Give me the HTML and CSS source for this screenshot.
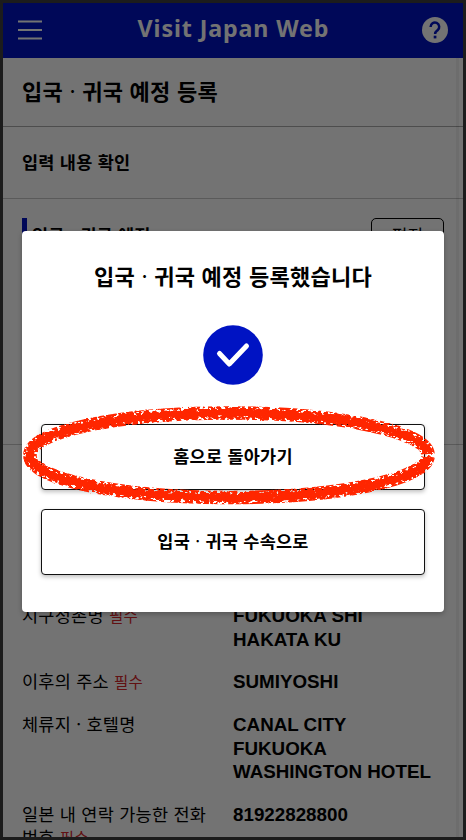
FILE: index.html
```
<!DOCTYPE html>
<html lang="ko">
<head>
<meta charset="utf-8">
<title>Visit Japan Web</title>
<link rel="stylesheet" href="styles.css">
</head>
<body>

<div class="screen">
  <header class="header">
    <svg class="menu-icon" width="24" height="20" viewBox="0 0 24 20">
      <path d="M0 1.5h24M0 10h24M0 18.5h24" stroke="#fff" stroke-width="2.2"/>
    </svg>
    <div class="logo">Visit Japan Web</div>
    <svg class="help-icon" width="26" height="26" viewBox="0 0 26 26">
      <circle cx="13" cy="13" r="13" fill="#fff"/>
      <path d="M8.6 10a4.3 4.3 0 1 1 7 3.2c-1.6 1.3-2.5 1.8-2.5 3.8" fill="none" stroke="#0013c3" stroke-width="2.5"/>
      <path d="M11.7 18.7h2.7v2.7h-2.7z" fill="#0013c3"/>
    </svg>
  </header>

  <h1 class="page-title">입국&nbsp;<span class="dot">·</span>&nbsp;귀국 예정 등록</h1>
  <h2 class="page-subtitle">입력 내용 확인</h2>

  <section class="plan">
    <h3 class="plan-title">입국 <span class="dot">·</span> 귀국 예정</h3>
    <button class="edit-button">편집</button>
  </section>

  <section class="address">
    <div class="row">
      <div class="label">시구정촌명 <span class="required">필수</span></div>
      <div class="value">FUKUOKA SHI<br>HAKATA KU</div>
    </div>
    <div class="row">
      <div class="label">이후의 주소 <span class="required">필수</span></div>
      <div class="value">SUMIYOSHI</div>
    </div>
    <div class="row">
      <div class="label">체류지 · 호텔명</div>
      <div class="value">CANAL CITY<br>FUKUOKA<br>WASHINGTON HOTEL</div>
    </div>
    <div class="row">
      <div class="label">일본 내 연락 가능한 전화<br>번호 <span class="required">필수</span></div>
      <div class="value">81922828800</div>
    </div>
  </section>
  <div class="scroll-track"></div>
</div>

<div class="overlay">
  <div class="modal">
    <h2 class="modal-title">입국 <span class="dot">·</span> 귀국 예정 등록했습니다</h2>
    <svg class="check-icon" width="60" height="60" viewBox="0 0 60 60">
      <circle cx="30" cy="30" r="29.8" fill="#0013c3"/>
      <path d="M16.5 28.5L26.3 39L43.5 21" fill="none" stroke="#fff" stroke-width="5" stroke-linecap="round" stroke-linejoin="round"/>
    </svg>
    <button class="modal-button">홈으로 돌아가기</button>
    <button class="modal-button">입국 <span class="dot">·</span> 귀국 수속으로</button>
  </div>
</div>

<!-- crayon circle around the home button -->
<svg class="marker" width="426" height="110" viewBox="0 0 426 110">
  <defs>
    <filter id="crayon" x="0" y="0" width="426" height="110" filterUnits="userSpaceOnUse">
      <feTurbulence type="fractalNoise" baseFrequency="0.22" numOctaves="3" seed="4" result="noise"/>
      <feDisplacementMap in="SourceGraphic" in2="noise" scale="9" xChannelSelector="R" yChannelSelector="G"/>
    </filter>
    <filter id="grain" x="0" y="0" width="426" height="110" filterUnits="userSpaceOnUse">
      <feTurbulence type="fractalNoise" baseFrequency="0.25 0.4" numOctaves="2" seed="9"/>
      <feColorMatrix values="0 0 0 0 0  0 0 0 0 0  0 0 0 0 0  0 0 0 14 -6.1" result="holes"/>
      <feComposite in="SourceGraphic" in2="holes" operator="in"/>
    </filter>
  </defs>
  <g fill="none" stroke="#ff2600">
    <path d="M411 54A199 41.5 0 0 0 13 55A199 41.5 0 0 0 411 57" stroke-width="8.5" filter="url(#crayon)"/>
    <path d="M411 54A199 41.5 0 0 0 13 55A199 41.5 0 0 0 411 57" stroke-width="13.5" filter="url(#grain)"/>
  </g>
</svg>

</body>
</html>
```
FILE: styles.css
```
* {
  box-sizing: border-box;
}

body {
  background-color: #1c1c1c;
  font-family: "Liberation Sans", "Noto Sans CJK KR", sans-serif;
  height: 840px;
  margin: 0;
  overflow: hidden;
  padding: 3px;
  position: relative;
}

h1, h2, h3 {
  font-family: "Noto Sans CJK KR", sans-serif;
  font-weight: bold;
  letter-spacing: 0.25px;
  margin: 0;
}

.dot {
  font-weight: normal;
}

.screen {
  background-color: white;
  color: black;
  height: 834px;
  overflow: hidden;
  position: relative;
}

.header {
  align-items: center;
  background-color: #0013c3;
  display: flex;
  height: 55px;
  justify-content: space-between;
  padding: 0 15px 1px;
}

.logo {
  color: white;
  font-family: "Noto Sans", sans-serif;
  font-size: 23.2px;
  font-weight: bold;
  letter-spacing: 0.9px;
  padding: 0 0 4px 3px;
}

.page-title {
  align-items: center;
  border-bottom: 1px solid #aaa;
  display: flex;
  font-size: 22px;
  height: 69px;
  padding: 0 19px 4px;
}

.page-subtitle {
  align-items: center;
  border-bottom: 1px solid #c8c8c8;
  display: flex;
  font-size: 17.5px;
  height: 72px;
  padding: 0 19px 2px;
}

.plan {
  align-items: flex-start;
  border-bottom: 1px solid #c8c8c8;
  display: flex;
  height: 246px;
  justify-content: space-between;
  padding: 19px 19px 0;
}

.plan-title {
  border-left: 5px solid #0013c3;
  font-size: 17.5px;
  line-height: 33px;
  padding-left: 5px;
}

.edit-button {
  background-color: white;
  border: 1px solid black;
  border-radius: 5px;
  font-family: "Noto Sans CJK KR", sans-serif;
  font-size: 17px;
  height: 36px;
  padding: 0 0 3px;
  width: 73px;
}

.address {
  display: flex;
  flex-direction: column;
  gap: 19.4px;
  padding: 159px 19px 0;
}

.row {
  align-items: flex-start;
  display: flex;
}

.label {
  flex: 0 0 211px;
  font-family: "Noto Sans CJK KR", sans-serif;
  font-size: 17.5px;
  height: 22px;
  letter-spacing: 0.25px;
  line-height: 22.4px;
  white-space: nowrap;
}

.required {
  color: #d7262b;
  font-size: 15.5px;
}

.value {
  font-size: 18.8px;
  font-weight: bold;
  line-height: 23.5px;
  white-space: nowrap;
}

.scroll-track {
  background-color: rgba(0, 0, 0, 0.05);
  bottom: 0;
  position: absolute;
  right: 4px;
  top: 55px;
  width: 3px;
}

.overlay {
  align-items: flex-start;
  background-color: rgba(0, 0, 0, 0.55);
  display: flex;
  height: 834px;
  left: 3px;
  padding: 228px 19px 0;
  position: absolute;
  top: 3px;
  width: 460px;
}

.modal {
  align-items: center;
  background-color: white;
  border-radius: 4px;
  box-shadow: 0 2px 5px rgba(0, 0, 0, 0.25);
  display: flex;
  flex-direction: column;
  height: 381px;
  padding: 27px 19px 0;
  width: 422px;
}

.modal-title {
  font-size: 22px;
  line-height: 34px;
  white-space: nowrap;
}

.check-icon {
  margin: 33px 0 39px;
}

.modal-button {
  background-color: white;
  border: 1px solid #111;
  border-radius: 4px;
  box-shadow: 0 2px 4px rgba(0, 0, 0, 0.25);
  color: black;
  flex: none;
  font-family: "Noto Sans CJK KR", sans-serif;
  font-size: 17.5px;
  font-weight: bold;
  height: 66px;
  letter-spacing: 0.25px;
  margin-bottom: 19px;
  padding: 0 0 4px;
  width: 384px;
}

.marker {
  left: 17px;
  position: absolute;
  top: 400px;
}
```
